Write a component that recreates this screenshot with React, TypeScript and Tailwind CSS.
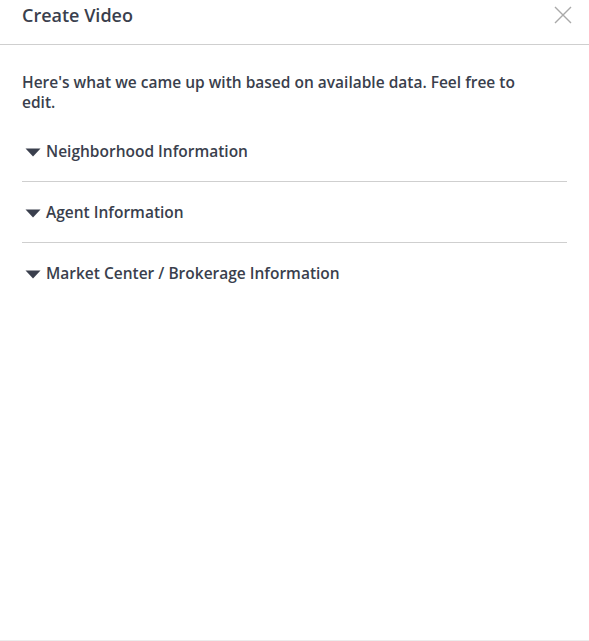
import React from "react";

const items = ["Neighborhood Information", "Agent Information", "Market Center / Brokerage Information"];

function Caret() {
  return (
    <svg width="16" height="9" viewBox="0 0 16 9" className="shrink-0">
      <path d="M0.5 0.5 L15.5 0.5 L8 8.5 Z" fill="#3a3f4d" />
    </svg>
  );
}

export default function App() {
  return (
    <div
      className="w-[589px] h-[641px] bg-white flex flex-col border-b border-[#ececec] text-[#3a3f4d]"
      style={{ fontFamily: "'Open Sans', sans-serif" }}
    >
      <div className="h-[45px] shrink-0 flex items-start justify-between pl-[22px] pr-[16px] border-b border-[#cfcfcf]">
        <div className="text-[18px] font-semibold leading-[22px] mt-[4px]">Create Video</div>
        <svg width="20" height="20" viewBox="0 0 20 20" className="mt-[5px]">
          <path d="M2 2 L18 18 M18 2 L2 18" stroke="#a9a9a9" strokeWidth="1.4" />
        </svg>
      </div>
      <div className="px-[22px] pt-[27px]">
        <p className="w-[525px] text-[15.5px] font-semibold leading-[20px]">
          Here's what we came up with based on available data. Feel free to edit.
        </p>
        <div className="mt-[9px] flex flex-col">
          {items.map((t, i) => (
            <div key={t} className={i < items.length - 1 ? "border-b border-[#cfcfcf]" : ""}>
              <div className="h-[60px] flex items-center gap-[5px] pl-[3px] pt-[2px]">
                <Caret />
                <span className="text-[15.5px] font-semibold">{t}</span>
              </div>
            </div>
          ))}
        </div>
      </div>
    </div>
  );
}
